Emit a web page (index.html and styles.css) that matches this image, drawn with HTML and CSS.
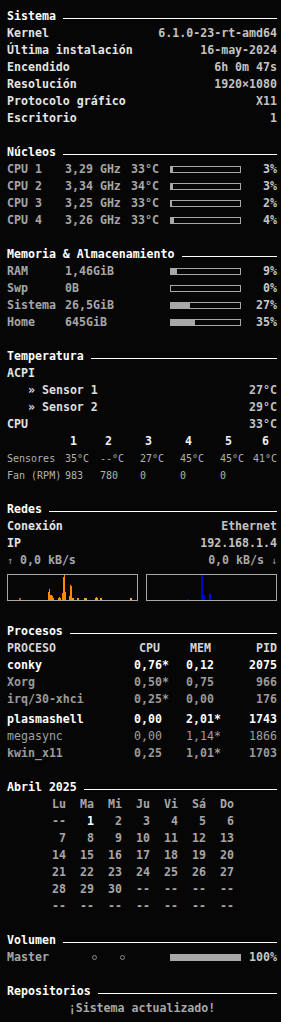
FILE: index.html
```html
<!DOCTYPE html>
<html lang="es">
<head>
    <meta charset="UTF-8">
    <title>Conky</title>
    <link rel="stylesheet" href="styles.css">
</head>
<body>

    <div class="title">Sistema</div>
    <div class="row"><span class="lbl">Kernel</span><span class="val">6.1.0-23-rt-amd64</span></div>
    <div class="row"><span class="lbl">Última instalación</span><span class="val">16-may-2024</span></div>
    <div class="row"><span class="lbl">Encendido</span><span class="val">6h 0m 47s</span></div>
    <div class="row"><span class="lbl">Resolución</span><span class="val">1920×1080</span></div>
    <div class="row"><span class="lbl">Protocolo gráfico</span><span class="val">X11</span></div>
    <div class="row"><span class="lbl">Escritorio</span><span class="val">1</span></div>
    <div class="blank"></div>

    <div class="title">Núcleos</div>
    <div class="core">
        <span>CPU 1</span><span>3,29 GHz</span><span>33°C</span>
        <span class="bar"><i style="width: 3%"></i></span><span class="pct">3%</span>
    </div>
    <div class="core">
        <span>CPU 2</span><span>3,34 GHz</span><span>34°C</span>
        <span class="bar"><i style="width: 3%"></i></span><span class="pct">3%</span>
    </div>
    <div class="core">
        <span>CPU 3</span><span>3,25 GHz</span><span>33°C</span>
        <span class="bar"><i style="width: 2%"></i></span><span class="pct">2%</span>
    </div>
    <div class="core">
        <span>CPU 4</span><span>3,26 GHz</span><span>33°C</span>
        <span class="bar"><i style="width: 4%"></i></span><span class="pct">4%</span>
    </div>
    <div class="blank"></div>

    <div class="title">Memoria &amp; Almacenamiento</div>
    <div class="mem">
        <span>RAM</span><span>1,46GiB</span>
        <span class="bar"><i style="width: 9%"></i></span><span class="pct">9%</span>
    </div>
    <div class="mem">
        <span>Swp</span><span>0B</span>
        <span class="bar"><i style="width: 0%"></i></span><span class="pct">0%</span>
    </div>
    <div class="mem">
        <span>Sistema</span><span>26,5GiB</span>
        <span class="bar"><i style="width: 27%"></i></span><span class="pct">27%</span>
    </div>
    <div class="mem">
        <span>Home</span><span>645GiB</span>
        <span class="bar"><i style="width: 35%"></i></span><span class="pct">35%</span>
    </div>
    <div class="blank"></div>

    <div class="title">Temperatura</div>
    <div class="row"><span class="lbl">ACPI</span></div>
    <div class="row"><span class="sensor">» Sensor 1</span><span class="val">27°C</span></div>
    <div class="row"><span class="sensor">» Sensor 2</span><span class="val">29°C</span></div>
    <div class="row"><span class="lbl">CPU</span><span class="val">33°C</span></div>
    <div class="temps head">
        <span></span><span>1</span><span>2</span><span>3</span><span>4</span><span>5</span><span>6</span>
    </div>
    <div class="temps">
        <span>Sensores</span><span>35°C</span><span>--°C</span><span>27°C</span><span>45°C</span><span>45°C</span><span>41°C</span>
    </div>
    <div class="temps">
        <span>Fan (RPM)</span><span>983</span><span>780</span><span>0</span><span>0</span><span>0</span><span></span>
    </div>
    <div class="blank"></div>

    <div class="title">Redes</div>
    <div class="row"><span class="lbl">Conexión</span><span class="val">Ethernet</span></div>
    <div class="row"><span class="lbl">IP</span><span class="val">192.168.1.4</span></div>
    <div class="row net">
        <span><small>↑</small> 0,0 kB/s</span>
        <span>0,0 kB/s <small>↓</small></span>
    </div>
    <div class="graphs">
        <svg class="graph" viewBox="0 0 129 25" preserveAspectRatio="none">
            <rect x="11" y="23" width="2" height="2" fill="#e0501c"/>
            <rect x="40" y="17" width="1" height="8" fill="#ff8a00"/>
            <rect x="41" y="14" width="1" height="11" fill="#ff8a00"/>
            <rect x="42" y="20" width="2" height="5" fill="#ff8a00"/>
            <rect x="44" y="21" width="1" height="4" fill="#ff8a00"/>
            <rect x="45" y="23" width="1" height="2" fill="#ff8a00"/>
            <rect x="50" y="23" width="3" height="2" fill="#ff9000"/>
            <rect x="51" y="22" width="1" height="1" fill="#ff9000"/>
            <rect x="54" y="18" width="1" height="7" fill="#ff8a00"/>
            <rect x="55" y="2" width="1" height="23" fill="#ff8a00"/>
            <rect x="56" y="0" width="1" height="25" fill="#ff8a00"/>
            <rect x="57" y="17" width="1" height="8" fill="#ff8a00"/>
            <rect x="61" y="21" width="1" height="4" fill="#ff8a00"/>
            <rect x="62" y="10" width="1" height="15" fill="#ff8a00"/>
            <rect x="63" y="11" width="1" height="14" fill="#ff8a00"/>
            <rect x="64" y="23" width="2" height="2" fill="#ff9a00"/>
            <rect x="69" y="23" width="2" height="2" fill="#ffa000"/>
            <rect x="76" y="23" width="3" height="2" fill="#ffa000"/>
            <rect x="87" y="23" width="3" height="2" fill="#ffa000"/>
            <rect x="88" y="22" width="1" height="1" fill="#ffa000"/>
            <rect x="92" y="23" width="2" height="2" fill="#ffa800"/>
            <rect x="122" y="23" width="2" height="2" fill="#e8b400"/>
        </svg>
        <svg class="graph" viewBox="0 0 129 25" preserveAspectRatio="none">
            <rect x="40" y="24" width="2" height="1" fill="#0010b0"/>
            <rect x="54" y="0" width="2" height="25" fill="#0008c8"/>
            <rect x="56" y="20" width="2" height="5" fill="#0008c8"/>
            <rect x="62" y="19" width="2" height="6" fill="#0010d0"/>
        </svg>
    </div>
    <div class="blank"></div>

    <div class="title">Procesos</div>
    <div class="procs head">
        <span>PROCESO</span><span>CPU</span><span>MEM</span><span>PID</span>
    </div>
    <div class="procs top">
        <span>conky</span><span>0,76*</span><span>0,12</span><span>2075</span>
    </div>
    <div class="procs">
        <span>Xorg</span><span>0,50*</span><span>0,75</span><span>966</span>
    </div>
    <div class="procs">
        <span>irq/30-xhci</span><span>0,25*</span><span>0,00</span><span>176</span>
    </div>
    <div class="procs top second">
        <span>plasmashell</span><span>0,00</span><span>2,01*</span><span>1743</span>
    </div>
    <div class="procs thin">
        <span>megasync</span><span>0,00</span><span>1,14*</span><span>1866</span>
    </div>
    <div class="procs">
        <span>kwin_x11</span><span>0,25</span><span>1,01*</span><span>1703</span>
    </div>
    <div class="blank"></div>

    <div class="title">Abril 2025</div>
    <div class="cal">
        <span>Lu</span><span>Ma</span><span>Mi</span><span>Ju</span><span>Vi</span><span>Sá</span><span>Do</span>
        <span>--</span><span class="today">1</span><span>2</span><span>3</span><span>4</span><span>5</span><span>6</span>
        <span>7</span><span>8</span><span>9</span><span>10</span><span>11</span><span>12</span><span>13</span>
        <span>14</span><span>15</span><span>16</span><span>17</span><span>18</span><span>19</span><span>20</span>
        <span>21</span><span>22</span><span>23</span><span>24</span><span>25</span><span>26</span><span>27</span>
        <span>28</span><span>29</span><span>30</span><span>--</span><span>--</span><span>--</span><span>--</span>
        <span>--</span><span>--</span><span>--</span><span>--</span><span>--</span><span>--</span><span>--</span>
    </div>
    <div class="blank"></div>

    <div class="title">Volumen</div>
    <div class="mem vol">
        <span>Master</span>
        <span class="dots"><b></b><b></b></span>
        <span class="bar"><i style="width: 100%"></i></span><span class="pct">100%</span>
    </div>
    <div class="blank"></div>

    <div class="title">Repositorios</div>
    <div class="repo">¡Sistema actualizado!</div>

</body>
</html>
```

FILE: styles.css
```css
*{
    box-sizing: border-box;
}
html, body{
    margin: 0;
    padding: 0;
}

body{
    width: 281px;
    height: 1022px;
    overflow: hidden;
    padding: 8px 4px 0 7px;
    background-color: #060606;
    color: #c4c4c4;
    font-family: 'DejaVu Sans Mono', 'Liberation Mono', monospace;
    font-size: 11.6px;
    font-weight: bold;
    line-height: 17px;
}

.blank{
    height: 17px;
}

.title{
    display: flex;
    align-items: center;
    gap: 7px;
    color: #ffffff;
}
.title::after{
    content: '';
    flex: 1;
    height: 1px;
    margin-top: 3px;
    background-color: #ffffff;
}

.row{
    display: flex;
    justify-content: space-between;
    white-space: pre;
}
.lbl{
    color: #e4e4e4;
}
.val{
    color: #c2c2c2;
}
.sensor{
    padding-left: 21px;
    color: #dedede;
}

/* bars */
.bar{
    display: flex;
    height: 7px;
    border: 1px solid #a8a8a8;
    align-self: center;
}
.bar i{
    display: block;
    height: 100%;
    background-color: #a8a8a8;
}
.pct{
    text-align: right;
    color: #c6c6c6;
}

.core{
    display: grid;
    grid-template-columns: 58px 66px 39px 71px 1fr;
    color: #a6a6a6;
}

.mem{
    display: grid;
    grid-template-columns: 58px 105px 71px 1fr;
    color: #a6a6a6;
}

/* temperature table */
.temps{
    display: grid;
    grid-template-columns: 58px 35px 40px 40px 40px 31px 1fr;
    font-size: 10px;
    font-weight: normal;
    color: #b2b2b2;
    white-space: pre;
}
.temps > span:last-child{
    text-align: right;
}
.temps.head{
    font-size: 11.6px;
    font-weight: bold;
    color: #f0f0f0;
}
.temps.head > span{
    padding-left: 5px;
}
.temps.head > span:last-child{
    text-align: left;
    padding-left: 11px;
}

/* net */
.net{
    color: #a8a8a8;
}
.net small{
    font-size: 10px;
    font-weight: normal;
    color: #9a9a9a;
}
.graphs{
    display: flex;
    justify-content: space-between;
    padding: 5px 0;
}
.graph{
    display: block;
    width: 131px;
    height: 27px;
    border: 1px solid #a8a8a8;
}

/* processes */
.procs{
    display: grid;
    grid-template-columns: 127px 52px 40px 1fr;
    color: #9a9a9a;
}
.procs > span:last-child{
    text-align: right;
}
.procs.head{
    color: #d6d6d6;
}
.procs.head > span:nth-child(2){
    padding-left: 5px;
}
.procs.head > span:nth-child(3){
    padding-left: 4px;
}
.procs.top{
    color: #ffffff;
}
.procs.second{
    margin-top: 3px;
}
.procs.thin{
    font-weight: normal;
    color: #a0a0a0;
}

/* calendar */
.cal{
    display: grid;
    grid-template-columns: repeat(7, 28px);
    padding-left: 45px;
    color: #a6a6a6;
}
.cal span{
    width: 14px;
    text-align: right;
    white-space: pre;
}
.cal .today{
    color: #ffffff;
}

/* volume */
.dots{
    display: flex;
    align-items: center;
    gap: 23px;
    padding-left: 27px;
}
.dots b{
    display: block;
    width: 5px;
    height: 5px;
    border: 1px solid #8a8a8a;
    border-radius: 50%;
}

.repo{
    text-align: center;
    color: #a8a8a8;
}
```
